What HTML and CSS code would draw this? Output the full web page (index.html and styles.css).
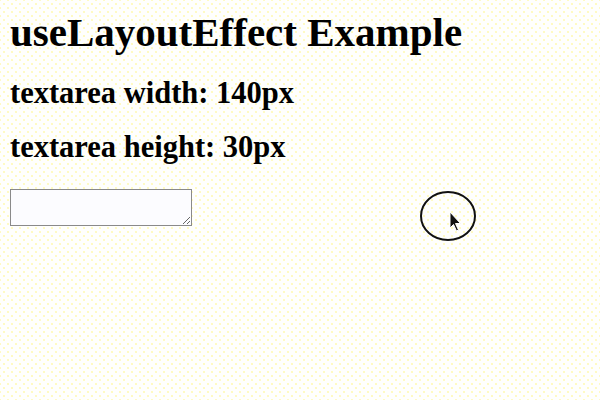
FILE: index.html
```html
<!DOCTYPE html>
<html>
<head>
<meta charset="utf-8">
<link rel="stylesheet" href="styles.css">
</head>
<body>
<div class="app">
  <h1 class="title">useLayoutEffect Example</h1>
  <h2 class="info">textarea width: 140px</h2>
  <h2 class="info">textarea height: 30px</h2>
  <textarea class="box"></textarea>
</div>
<svg class="cursor" width="64" height="64" viewBox="0 0 64 64">
  <ellipse cx="28" cy="28" rx="27" ry="24" fill="none" stroke="#111" stroke-width="2"/>
  <path d="M30 24 L30 40 L33.5 36.5 L36.5 43 L38.5 42 L35.5 35.5 L40.5 35.5 Z" fill="#111" stroke="#fff" stroke-width="1"/>
</svg>
</body>
</html>
```
FILE: styles.css
```css
html, body {
  margin: 0;
  height: 100%;
}
body {
  background-color: #fffffd;
  background-image:
    radial-gradient(circle, #fff480 0.6px, transparent 0.8px),
    radial-gradient(circle, #fff480 0.6px, transparent 0.8px);
  background-size: 8px 8px;
  background-position: 0 0, 4px 4px;
  font-family: "Liberation Serif", "Times New Roman", serif;
  color: #000;
  position: relative;
}
.app {
  padding: 11px 10px 0 10px;
  display: flex;
  flex-direction: column;
  align-items: flex-start;
}
.title {
  font-size: 41px;
  font-weight: bold;
  margin: 0;
  line-height: 42px;
}
.info {
  font-size: 30.5px;
  font-weight: bold;
  margin: 0;
  line-height: 32px;
}
.title + .info {
  margin-top: 24px;
}
.info + .info {
  margin-top: 22px;
}
.box {
  margin-top: 26px;
  width: 182px;
  height: 37px;
  box-sizing: border-box;
  border: 1px solid #8a8a8a;
  background: #fcfcff;
  padding: 0;
}
.cursor {
  position: absolute;
  left: 420px;
  top: 188px;
}
```
